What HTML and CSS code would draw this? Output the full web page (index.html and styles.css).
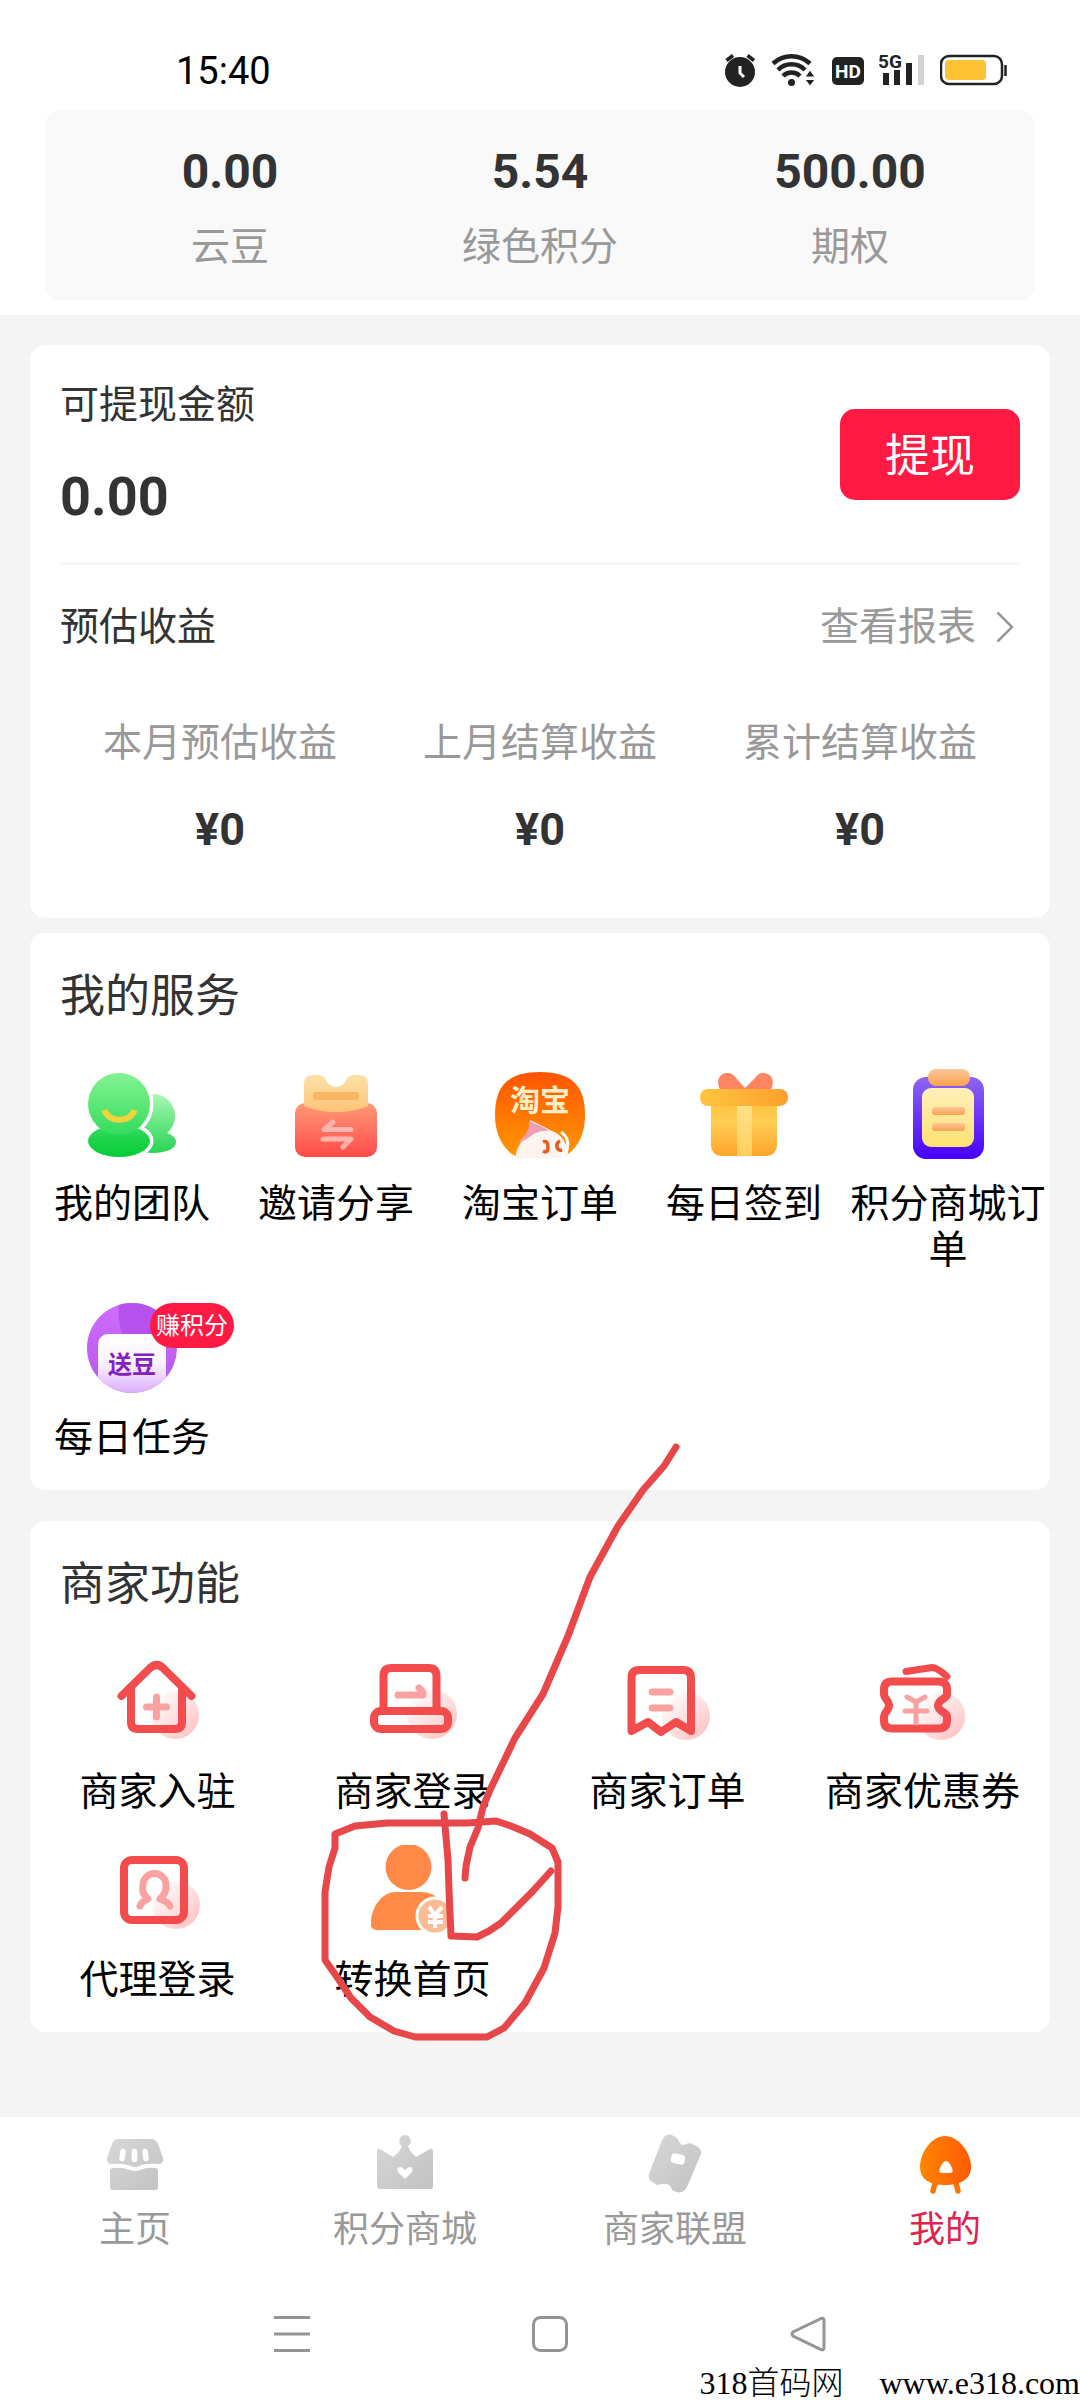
FILE: index.html
```html
<!DOCTYPE html>
<html lang="zh-CN">
<head>
<meta charset="utf-8">
<meta name="viewport" content="width=device-width, initial-scale=1">
<title>我的</title>
<link rel="stylesheet" href="styles.css">
</head>
<body>
<header class="top">
  <div class="status">
    <time class="clock">15:40</time>
    <div class="status-icons">
      <svg width="32" height="38" viewBox="0 0 32 38" aria-hidden="true"><circle cx="16" cy="21" r="15" fill="#222"/><path d="M2.500 9.500L9 4.500M23.500 4.500L30 9.500" stroke="#222" stroke-width="3.500" fill="none"/><path d="M16 15v7l4 4" stroke="#fff" stroke-width="3" fill="none"/></svg>
      <svg width="46" height="38" viewBox="0 0 46 38" aria-hidden="true"><g fill="none" stroke="#222" stroke-width="4.500"><path d="M2 12.500A27 27 0 0 1 39 12.500"/><path d="M7 19A19 19 0 0 1 34 19"/><path d="M12 25A12 12 0 0 1 29 25"/></g><circle cx="20.500" cy="31.500" r="3.500" fill="#222"/><path d="M34 26l5-7 5 7zM34 28.500h10l-5 6.500z" fill="#222" stroke="#fff" stroke-width="1"/></svg>
      <svg width="32" height="38" viewBox="0 0 32 38" aria-hidden="true"><rect y="6" width="32" height="28" rx="5" fill="#222"/><text class="status-glyph" x="16" y="27" text-anchor="middle" fill="#fff">HD</text></svg>
      <svg width="46" height="38" viewBox="0 0 46 38" aria-hidden="true"><text class="status-glyph" x="-1" y="17" fill="#222">5G</text><path d="M4 22h6v12H4zM15 19h6v15h-6zM27 12h6v22h-6z" fill="#222"/><path d="M39 4h6v30h-6z" fill="#d2d2d2"/></svg>
      <svg width="67" height="38" viewBox="0 0 67 38" aria-hidden="true"><rect x="1" y="5" width="61" height="28" rx="8" fill="#fff" stroke="#222" stroke-width="2.500"/><rect x="5" y="9" width="41" height="20" rx="4" fill="#ffc234"/><path d="M65.500 14v11" stroke="#222" stroke-width="2.500"/></svg>
    </div>
  </div>
  <dl class="stats">
    <div><dd>0.00</dd><dt>云豆</dt></div>
    <div><dd>5.54</dd><dt>绿色积分</dt></div>
    <div><dd>500.00</dd><dt>期权</dt></div>
  </dl>
</header>

<main class="content">
  <section class="card wallet">
    <div class="balance">
      <div>
        <p class="label">可提现金额</p>
        <p class="amount">0.00</p>
      </div>
      <button class="withdraw" type="button">提现</button>
    </div>
    <div class="report">
      <h2 class="label">预估收益</h2>
      <a class="more" href="#report">查看报表
        <svg width="18" height="32" viewBox="0 0 18 32" aria-hidden="true"><path d="M1.500 1.500L16 16 1.500 30.500" fill="none" stroke="#999" stroke-width="2.500"/></svg>
      </a>
    </div>
    <dl class="earnings">
      <div><dt>本月预估收益</dt><dd>¥0</dd></div>
      <div><dt>上月结算收益</dt><dd>¥0</dd></div>
      <div><dt>累计结算收益</dt><dd>¥0</dd></div>
    </dl>
  </section>

  <section class="card services">
    <h2 class="title">我的服务</h2>
    <nav class="grid five">
      <a class="item" href="#team">
        <svg class="icon" viewBox="0 0 90 90" aria-hidden="true">
          <defs>
            <linearGradient id="team-a" gradientUnits="userSpaceOnUse" x1="0" y1="4" x2="0" y2="66"><stop offset="0" stop-color="#85f292"/><stop offset="1" stop-color="#34dc5e"/></linearGradient>
            <linearGradient id="team-b" x1="0" y1="0" x2="0" y2="1"><stop offset="0" stop-color="#34dc5e"/><stop offset="1" stop-color="#05cb35"/></linearGradient>
            <linearGradient id="team-c" gradientUnits="userSpaceOnUse" x1="0" y1="25" x2="0" y2="84"><stop offset="0" stop-color="#a9f8b4"/><stop offset="1" stop-color="#27d454"/></linearGradient>
          </defs>
          <path d="M66 25a22 22 0 0 1 14 39c6 2 9 5 9 9 0 7-11 11-23 11-12 0-22-5-22-11z" fill="url(#team-c)"/>
          <g fill="#fff" stroke="#fff" stroke-width="7"><circle cx="32" cy="35" r="31"/><ellipse cx="32" cy="72" rx="31" ry="16"/></g>
          <ellipse cx="32" cy="72" rx="31" ry="16" fill="url(#team-b)"/>
          <circle cx="32" cy="35" r="31" fill="url(#team-a)"/>
          <path d="M17.500 41C21 54 44 54 47.500 41" fill="none" stroke="#f3d43c" stroke-width="6"/>
        </svg>
        <span>我的团队</span>
      </a>
      <a class="item" href="#invite">
        <svg class="icon" viewBox="0 0 90 90" aria-hidden="true">
          <defs>
            <linearGradient id="inv-a" x1="0" y1="0" x2="0" y2="1"><stop offset="0" stop-color="#ff9a78"/><stop offset="1" stop-color="#ff4a48"/></linearGradient>
            <linearGradient id="inv-b" x1="0" y1="0" x2="0" y2="1"><stop offset="0" stop-color="#fce2a8"/><stop offset="1" stop-color="#fec476"/></linearGradient>
          </defs>
          <rect x="4" y="34" width="82" height="54" rx="10" fill="url(#inv-a)"/>
          <path d="M13 15q0-9 9-9h6q5 0 7 5 3 7 10 7t10-7q2-5 7-5h6q9 0 9 9v22q-14 6-32 6t-32-6z" fill="url(#inv-b)"/>
          <rect x="22" y="23" width="46" height="8" rx="3" fill="#f9b765"/>
          <path d="M42 53L33 60.500H60M32 70H60L52 78" fill="none" stroke="#ffb4ae" stroke-width="5" stroke-linecap="round" stroke-linejoin="round"/>
        </svg>
        <span>邀请分享</span>
      </a>
      <a class="item" href="#taobao">
        <svg class="icon" viewBox="0 0 90 90" aria-hidden="true">
          <defs>
            <linearGradient id="tb-a" x1="0" y1="0" x2="0" y2="1"><stop offset="0" stop-color="#ff5200"/><stop offset="1" stop-color="#ff9a00"/></linearGradient>
            <clipPath id="tb-c"><path d="M45 3c32 0 45 14 45 43 0 20-8 36-24 43H24C8 82 0 66 0 46 0 17 13 3 45 3z"/></clipPath>
          </defs>
          <g clip-path="url(#tb-c)">
            <rect width="90" height="90" fill="url(#tb-a)"/>
            <path d="M20 90c1-12 8-20 14-26l1-13c8 4 15 7 22 11 10 3 16 13 17 28z" fill="#fdf4f0"/>
            <path d="M34 52c8 3 16 7 20 10-10-1-16 3-22 8-4 2-7 3-9 4 8-8 12-14 11-22z" fill="#ef9fb4"/>
            <path d="M48 73q5-2 5 5t-5 4M65 72q-4 2-3 6t5 3" fill="none" stroke="#e85a1c" stroke-width="3.500"/>
            <path d="M66 63q9 6 6 18l-5 8" fill="none" stroke="#fff" stroke-width="3"/>
          </g>
          <text class="taobao-text" x="45" y="42" text-anchor="middle" fill="#ffedc8">淘宝</text>
        </svg>
        <span>淘宝订单</span>
      </a>
      <a class="item" href="#checkin">
        <svg class="icon" viewBox="0 0 90 90" aria-hidden="true">
          <defs>
            <linearGradient id="gf-a" x1="0" y1="0" x2="0" y2="1"><stop offset="0" stop-color="#ffc23e"/><stop offset=".35" stop-color="#ffcd55"/><stop offset="1" stop-color="#ffa42c"/></linearGradient>
            <linearGradient id="gf-b" x1="0" y1="0" x2="1" y2="0"><stop offset="0" stop-color="#ffc53f"/><stop offset="1" stop-color="#fda02e"/></linearGradient>
            <linearGradient id="gf-c" x1="0" y1="0" x2="0" y2="1"><stop offset="0" stop-color="#ffe18c"/><stop offset="1" stop-color="#ffcf5c"/></linearGradient>
          </defs>
          <path d="M22 22c-6-9-2-18 6-18 4 0 6 1 9 5l9 10 10-10c3-4 5-5 8-5 9 0 13 9 7 18z" fill="#ff8562"/>
          <path d="M12 34h66v41q0 12-12 12H24q-12 0-12-12z" fill="url(#gf-a)"/>
          <path d="M38 37h15v50H38z" fill="url(#gf-c)"/>
          <rect x="1" y="20" width="88" height="17" rx="8" fill="url(#gf-b)"/>
        </svg>
        <span>每日签到</span>
      </a>
      <a class="item" href="#mall-orders">
        <svg class="icon" viewBox="0 0 90 90" aria-hidden="true">
          <defs>
            <linearGradient id="cb-a" x1="0" y1="0" x2="0" y2="1"><stop offset="0" stop-color="#8d66f0"/><stop offset="1" stop-color="#4600ff"/></linearGradient>
            <linearGradient id="cb-b" x1="0" y1="0" x2="0" y2="1"><stop offset="0" stop-color="#fdf0ba"/><stop offset="1" stop-color="#ffe171"/></linearGradient>
            <linearGradient id="cb-c" x1="0" y1="0" x2="0" y2="1"><stop offset="0" stop-color="#fdc79b"/><stop offset="1" stop-color="#faa24e"/></linearGradient>
          </defs>
          <rect x="10" y="8" width="71" height="82" rx="13" fill="url(#cb-a)"/>
          <rect x="25" y="0" width="42" height="17" rx="8" fill="url(#cb-c)"/>
          <rect x="19" y="19" width="52" height="59" rx="9" fill="url(#cb-b)"/>
          <rect x="29" y="38" width="33" height="8" rx="3" fill="url(#cb-c)"/>
          <rect x="29" y="54" width="33" height="8" rx="3" fill="url(#cb-c)"/>
        </svg>
        <span>积分商城订单</span>
      </a>
      <a class="item" href="#daily-task">
        <span class="icon-wrap">
          <svg class="icon" viewBox="0 0 90 90" aria-hidden="true">
            <defs>
              <linearGradient id="dt-a" x1="0" y1="0" x2="0" y2="1"><stop offset="0" stop-color="#cf6dfc"/><stop offset="1" stop-color="#b457ea"/></linearGradient>
              <linearGradient id="dt-b" gradientUnits="userSpaceOnUse" x1="0" y1="31" x2="0" y2="90"><stop offset="0" stop-color="#fff"/><stop offset=".5" stop-color="#fbf2fe"/><stop offset="1" stop-color="#dcaefb"/></linearGradient>
              <clipPath id="dt-c"><circle cx="45" cy="45" r="45"/></clipPath>
            </defs>
            <g clip-path="url(#dt-c)">
              <rect width="90" height="90" fill="url(#dt-a)"/>
              <path d="M32 0h40l-8 32H36q-6-14-4-32z" fill="#b552ee"/>
              <rect x="11" y="31" width="68" height="70" rx="10" fill="url(#dt-b)"/>
            </g>
            <text class="task-text" x="45" y="70" text-anchor="middle" fill="#8420c0">送豆</text>
          </svg>
          <em class="badge">赚积分</em>
        </span>
        <span>每日任务</span>
      </a>
    </nav>
  </section>

  <section class="card merchant">
    <h2 class="title">商家功能</h2>
    <nav class="grid four">
      <a class="item" href="#merchant-join">
        <svg class="icon line" viewBox="0 0 90 90" aria-hidden="true">
          <defs><linearGradient id="dot" x1="0" y1="0" x2="1" y2="1"><stop offset=".1" stop-color="#fff"/><stop offset="1" stop-color="#ffbcbc"/></linearGradient></defs>
          <circle cx="62" cy="58" r="24" fill="url(#dot)"/>
          <path class="red" d="M8.500 39L37 11q7-6 13 0l28.500 28M18 33v32q0 7 7 7h37q7 0 7-7V33"/>
          <path class="pink" d="M43.500 40v20M33.500 50h20"/>
        </svg>
        <span>商家入驻</span>
      </a>
      <a class="item" href="#merchant-login">
        <svg class="icon line" viewBox="0 0 90 90" aria-hidden="true">
          <circle cx="64" cy="57" r="25" fill="url(#dot)"/>
          <path class="red" d="M15.500 53V19q0-8 8-8h37q8 0 8 8v34"/>
          <rect class="red" x="6" y="54" width="74" height="18" rx="7"/>
          <path class="pink" d="M30 38h25q1-3-4-7"/>
        </svg>
        <span>商家登录</span>
      </a>
      <a class="item" href="#merchant-orders">
        <svg class="icon line" viewBox="0 0 90 90" aria-hidden="true">
          <circle cx="63" cy="59" r="24" fill="url(#dot)"/>
          <path class="red" d="M8.500 74V21q0-8 8-8H60q8 0 8 8v53L53 65 38 75 25 65z"/>
          <path class="pink" d="M29 35h18M29 51h18"/>
        </svg>
        <span>商家订单</span>
      </a>
      <a class="item" href="#merchant-coupons">
        <svg class="icon line" viewBox="0 0 90 90" aria-hidden="true">
          <circle cx="63" cy="59" r="24" fill="url(#dot)"/>
          <path class="red" d="M14 24.500h46q9 0 9 8v5c0 4-9 5-9 11s9 7 9 11v4q0 8-9 8H14q-8 0-8-8v-4c0-4 5-6 5-11s-5-7-5-11v-5q0-8 8-8z"/>
          <path class="red small" d="M28 14.500L54 10.500q5 0 15 9"/>
          <path class="pink thin" d="M29 40l9 5 9-5M38 45v21M27 54h22"/>
        </svg>
        <span>商家优惠券</span>
      </a>
      <a class="item" href="#agent-login">
        <svg class="icon line" viewBox="0 0 90 90" aria-hidden="true">
          <circle cx="63" cy="60" r="24" fill="url(#dot)"/>
          <rect class="red" x="11" y="15" width="60" height="60" rx="8"/>
          <path class="pink" d="M27 61q1-4 8-7-7-6-5-14a11.500 11.500 0 0 1 23 0q1 8-6 14 8 3 10 7"/>
        </svg>
        <span>代理登录</span>
      </a>
      <a class="item" href="#switch-home">
        <svg class="icon" viewBox="0 0 90 90" aria-hidden="true">
          <circle cx="40.500" cy="22" r="23" fill="#ff8a48"/>
          <path d="M28 47h25c16 0 26 12 26 30q0 8-6 8H9q-7 0-6-8c1-17 12-30 25-30z" fill="#ff8a48"/>
          <circle cx="67" cy="71" r="18" fill="#fcbc96" stroke="#fff" stroke-width="3"/>
          <path d="M61 62l6 8 7-8M67 70v13M60 71h15M60 77h15" fill="none" stroke="#fff" stroke-width="4"/>
        </svg>
        <span>转换首页</span>
      </a>
    </nav>

    <svg class="scribble" width="390" height="620" viewBox="300 1430 390 620" aria-hidden="true">
      <path d="M676 1447L664 1466 643 1490 618 1526 590 1577 568 1636 543 1694 515 1738 503 1763 490 1790 483 1807 478 1828 470 1847 466 1866 465 1878"/>
      <path d="M444 1814L446 1837 448 1860 449 1890 451 1936 477 1937 489 1931 501 1923 523 1901 532 1892 551 1871"/>
      <path d="M335 1834L355 1826 387 1823 468 1823 496 1821 511 1826 530 1834 552 1848 558 1862 558 1907 555 1933 544 1968 525 2003 504 2028 487 2037 415 2037 394 2031 370 2017 351 1998 337 1977 325 1960 325 1892 329 1867 335 1848z"/>
    </svg>
  </section>
</main>

<footer class="bottom">
  <nav class="tabs">
    <a class="tab" href="#home">
      <svg width="60" height="60" viewBox="0 0 60 60" aria-hidden="true">
        <defs><linearGradient id="gray" x1="0" y1="0" x2="1" y2="1"><stop offset="0" stop-color="#d8d8d8"/><stop offset="1" stop-color="#c2c2c2"/></linearGradient></defs>
        <path d="M14 5h32q5 0 7 5l5 14q1 6-5 6-12-1-19 2-4 2-8 0-8-3-19-2-6 0-5-6L7 10q2-5 7-5zM8 34q10-1 17 2 5 2 10 0 7-3 15-2 3 0 3 3v16q0 3-3 3H8q-3 0-3-3V37q0-3 3-3z" fill="url(#gray)"/>
        <path d="M18 17.500l-1 7M29.500 17.500v8M40 17.500l1 7" stroke="#fff" stroke-width="5.500" stroke-linecap="round"/>
      </svg>
      <span>主页</span>
    </a>
    <a class="tab" href="#mall">
      <svg width="60" height="60" viewBox="0 0 60 60" aria-hidden="true">
        <path d="M30 1a6 6 0 0 1 3 11q2 6 8 11l14-8q3-1 3 2v35q0 3-3 3H5q-3 0-3-3V17q0-3 3-2l13 8q7-5 9-11a6 6 0 0 1 3-11z" fill="url(#gray)"/>
        <path d="M30 45l-7-7q-2-5 3-5l4 3 4-3q5 0 3 5z" fill="#fff"/>
      </svg>
      <span>积分商城</span>
    </a>
    <a class="tab" href="#union">
      <svg width="60" height="60" viewBox="0 0 60 60" aria-hidden="true">
        <path d="M27 1l5 3q3 7 6 7l7-2 8 4q4 3 3 7L42 53q-4 7-10 5-6-1-6-5-3-4-8-3l-6 1-6-4q-3-2-2-7L17 6q4-7 10-5z" fill="url(#gray)"/>
        <rect x="26" y="20" width="14" height="10" rx="4" fill="#fff" transform="rotate(12 33 25)"/>
      </svg>
      <span>商家联盟</span>
    </a>
    <a class="tab active" href="#mine" aria-current="page">
      <svg width="60" height="60" viewBox="0 0 60 60" aria-hidden="true">
        <defs><linearGradient id="mine" x1="0" y1="0" x2="1" y2="0"><stop offset="0" stop-color="#ff8500"/><stop offset="1" stop-color="#ff5a05"/></linearGradient></defs>
        <path d="M20 49l-2 8M41 49l2 8" stroke="#ff7400" stroke-width="5.500" stroke-linecap="round"/>
        <path d="M30 2c13 0 26 16 26 31 0 12-10 18-26 18S5 45 5 33C5 18 17 2 30 2z" fill="url(#mine)"/>
        <path d="M31 27q3 0 6 7 2 5-2 5H27q-4 0-2-5 3-7 6-7z" fill="#fff"/>
      </svg>
      <span>我的</span>
    </a>
  </nav>
  <div class="system-nav">
    <button type="button" aria-label="最近任务"><svg width="36" height="36" viewBox="0 0 36 36"><path d="M0 1.500h36M0 18h36M0 34.500h36" stroke="#949494" stroke-width="3"/></svg></button>
    <button type="button" aria-label="主屏幕"><svg width="36" height="36" viewBox="0 0 36 36"><rect x="1.500" y="1.500" width="33" height="33" rx="7" fill="none" stroke="#949494" stroke-width="3"/></svg></button>
    <button type="button" aria-label="返回"><svg width="36" height="36" viewBox="0 0 36 36"><path d="M31 2.500L3 16q-2 2 0 4l28 13.500q3 1 3-2v-27q0-3-3-2z" fill="none" stroke="#949494" stroke-width="3"/></svg></button>
  </div>
  <p class="site-mark"><span>318首码网</span><span>www.e318.com</span></p>
</footer>
</body>
</html>
```
FILE: styles.css
```css
* {
  box-sizing: border-box;
}

body {
  margin: 0;
  min-height: 100vh;
  display: flex;
  flex-direction: column;
  background: #f4f4f4;
  color: #000;
  font-family: Roboto, "Noto Sans CJK SC", sans-serif;
  font-weight: 400;
  font-size: 39px;
  line-height: 46px;
}

h2, p, dl, dd, dt {
  margin: 0;
  font-size: inherit;
  font-weight: inherit;
}

a {
  color: inherit;
  text-decoration: none;
}

button {
  border: 0;
  padding: 0;
  background: none;
  font: inherit;
}

svg {
  display: block;
}

/* Status bar and point totals */

.top {
  background: #fff;
  padding-bottom: 15px;
}

.status {
  display: flex;
  justify-content: space-between;
  align-items: center;
  padding: 43px 73px 14px 176px;
}

.clock {
  padding-top: 3px;
  font-size: 38px;
  line-height: 50px;
}

.status-icons {
  display: flex;
  gap: 15px;
}

.status-glyph {
  font-size: 19px;
  font-weight: 700;
}

.stats {
  display: grid;
  grid-template-columns: repeat(3, 1fr);
  margin: 0 45px;
  padding: 32px 30px 30px;
  border-radius: 15px;
  background: #f9f9f9;
  text-align: center;
}

.stats div {
  display: flex;
  flex-direction: column;
  gap: 22px;
}

.stats dd {
  color: #333;
  font-size: 48px;
  font-weight: 700;
  line-height: 60px;
}

.stats dt {
  color: #999;
}

/* Cards */

.content {
  flex: 1;
  padding: 30px 30px 85px;
}

.card {
  border-radius: 15px;
  background: #fff;
}

.wallet {
  padding: 37px 30px 61px;
  color: #333;
}

.balance {
  display: flex;
  justify-content: space-between;
  align-items: center;
  padding-bottom: 35px;
  border-bottom: 3px solid #f5f5f5;
}

.amount {
  margin-top: 39px;
  font-size: 54px;
  font-weight: 700;
  line-height: 60px;
}

.withdraw {
  width: 180px;
  height: 91px;
  padding-top: 5px;
  border-radius: 15px;
  background: #ff1a44;
  color: #fff;
  font-size: 45px;
}

.report {
  display: flex;
  justify-content: space-between;
  align-items: center;
  margin-top: 39px;
}

.more {
  display: flex;
  align-items: center;
  gap: 20px;
  padding-right: 6px;
  color: #999;
}

.earnings {
  display: grid;
  grid-template-columns: repeat(3, 1fr);
  margin-top: 70px;
  text-align: center;
}

.earnings dt {
  color: #999;
}

.earnings dd {
  margin-top: 37px;
  font-size: 45px;
  font-weight: 700;
  line-height: 54px;
}

.services {
  margin-top: 15px;
}

.merchant {
  position: relative;
  margin-top: 31px;
}

.services,
.merchant {
  padding: 32px 0 29px;
}

.title {
  margin-bottom: 40px;
  padding: 0 30px;
  color: #333;
  font-size: 45px;
  line-height: 64px;
}

.grid {
  display: grid;
  row-gap: 30px;
}

.five {
  grid-template-columns: repeat(5, 1fr);
}

.four {
  grid-template-columns: repeat(4, 1fr);
}

.item {
  display: flex;
  flex-direction: column;
  align-items: center;
  gap: 22px;
  text-align: center;
}

.icon {
  width: 90px;
  height: 90px;
}

.icon-wrap {
  position: relative;
}

.badge {
  position: absolute;
  top: 0;
  left: 63px;
  padding: 1px 6px 0;
  border-radius: 23px;
  background: #ff1a44;
  color: #fff;
  font-size: 24px;
  font-style: normal;
  line-height: 44px;
  white-space: nowrap;
}

.taobao-text {
  font-size: 30px;
  font-weight: 700;
}

.task-text {
  font-size: 24px;
  font-weight: 700;
}

.red,
.pink {
  fill: none;
  stroke: #f24c4c;
  stroke-width: 8;
  stroke-linecap: round;
  stroke-linejoin: round;
}

.pink {
  stroke: #faa2a2;
  stroke-width: 7;
}

.small {
  stroke-width: 7;
}

.thin {
  stroke-width: 5;
}

.scribble {
  position: absolute;
  top: -91px;
  left: 270px;
  fill: none;
  stroke: #e8474a;
  stroke-width: 7;
  stroke-linecap: round;
  stroke-linejoin: round;
  pointer-events: none;
}

/* Tab bar and system keys */

.bottom {
  background: #fff;
}

.tabs {
  display: grid;
  grid-template-columns: repeat(4, 1fr);
  padding-top: 17px;
}

.tab {
  display: flex;
  flex-direction: column;
  align-items: center;
  gap: 16px;
  color: #999;
  font-size: 36px;
  line-height: 40px;
}

.active {
  color: #e0234e;
}

.system-nav {
  display: grid;
  grid-template-columns: repeat(3, 1fr);
  justify-items: center;
  padding: 66px 143px 14px 163px;
}

.site-mark {
  display: flex;
  justify-content: flex-end;
  gap: 36px;
  font-family: "Liberation Serif", "Noto Sans CJK SC", serif;
  font-size: 32px;
  font-weight: 300;
  line-height: 34px;
}
```
